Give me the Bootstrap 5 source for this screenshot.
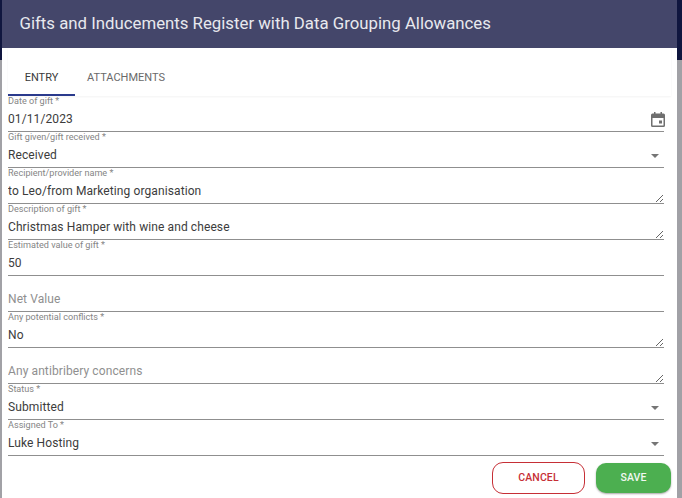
<!DOCTYPE html>
<html lang="en">
<head>
<meta charset="utf-8">
<title>Gifts and Inducements Register</title>
<link href="https://cdn.jsdelivr.net/npm/bootstrap@5.3.0/dist/css/bootstrap.min.css" rel="stylesheet">
<style>
html,body{height:498px;overflow:hidden;}
body{font-family:Roboto,"Liberation Sans",sans-serif;background:linear-gradient(#10163f 0,#10163f 60px,#a1a1a6 60px);}
.dlg{margin:0 5px 0 2px;height:498px;background:#fff;}
.dlg-head{height:48px;background:#44466a;color:#e8e9ee;font-size:16.8px;line-height:46px;padding-left:17.5px;}
.tabbar{height:48px;margin:0 6px;box-shadow:0 1px 2px rgba(0,0,0,.05);}
.tabbar .nav-link{height:48px;color:#6a6a6a;font-size:11px;line-height:16px;padding:22px 12px 0;border-radius:0;}
.tabbar .nav-link.active{color:#3a3a3a;border-bottom:2px solid #2a3a8c;width:67px;text-align:center;}
.fld{height:36px;margin:0 13px 0 6px;border-bottom:1px solid #8f8f8f;position:relative;}
.fld label{display:block;height:12px;font-size:9.1px;line-height:10px;color:#858585;white-space:nowrap;}
.fld .ctl{display:block;width:100%;height:23px;border:0;outline:0;padding:0;margin:0;background-color:transparent;font:12px/23px Roboto,sans-serif;color:#3c3c3c;letter-spacing:.1px;box-shadow:none;border-radius:0;}
.fld .ctl::placeholder{color:#8f8f8f;opacity:1;}
.fld textarea.ctl{resize:both;min-height:23px;max-height:23px;min-width:100%;max-width:100%;overflow:hidden;}
.fld select.ctl{appearance:none;}
.caret-i{position:absolute;right:5px;top:22px;width:0;height:0;border-left:4px solid transparent;border-right:4px solid transparent;border-top:4px solid #757575;}
.cal-i{position:absolute;right:-1px;top:16px;width:14px;height:15px;}
.foot{padding:6px 6px 0 0;gap:11px;}
.btn-c,.btn-s{font-size:10.5px;font-weight:500;padding:0;letter-spacing:.1px;}
.btn-c{width:93px;height:32px;line-height:30px;color:#c62f36;border:1px solid #c62f36;background:#fff;border-radius:11px;}
.btn-s{width:75px;height:30px;margin-top:1px;line-height:30px;color:#f2f7f2;border:0;background:#4caf50;border-radius:10px;box-shadow:0 1px 2px rgba(0,0,0,.35);}
</style>
</head>
<body>
<div class="dlg d-flex flex-column">
  <div class="dlg-head">Gifts and Inducements Register with Data Grouping Allowances</div>
  <ul class="nav tabbar flex-nowrap">
    <li class="nav-item"><a class="nav-link active" href="#">ENTRY</a></li>
    <li class="nav-item"><a class="nav-link" href="#">ATTACHMENTS</a></li>
  </ul>
  <form>
    <div class="fld"><label>Date of gift *</label><input class="ctl" value="01/11/2023">
      <svg class="cal-i" viewBox="0 0 14 15"><path fill="#6f6f6f" fill-rule="evenodd" d="M3 0h1.500v1.500h5V0H11v1.500h1.500A1.500 1.500 0 0 1 14 3v10.500a1.500 1.500 0 0 1-1.500 1.500h-11A1.500 1.500 0 0 1 0 13.500V3a1.500 1.500 0 0 1 1.500-1.500H3zM1.500 6v7.500h11V6zM8 8.500h3v3H8z"/></svg></div>
    <div class="fld"><label>Gift given/gift received *</label><select class="ctl"><option>Received</option></select><span class="caret-i"></span></div>
    <div class="fld"><label>Recipient/provider name *</label><textarea class="ctl" rows="1">to Leo/from Marketing organisation</textarea></div>
    <div class="fld"><label>Description of gift *</label><textarea class="ctl" rows="1">Christmas Hamper with wine and cheese</textarea></div>
    <div class="fld"><label>Estimated value of gift *</label><input class="ctl" value="50"></div>
    <div class="fld"><label>&nbsp;</label><input class="ctl" placeholder="Net Value"></div>
    <div class="fld"><label>Any potential conflicts *</label><textarea class="ctl" rows="1">No</textarea></div>
    <div class="fld"><label>&nbsp;</label><textarea class="ctl" rows="1" placeholder="Any antibribery concerns"></textarea></div>
    <div class="fld"><label>Status *</label><select class="ctl"><option>Submitted</option></select><span class="caret-i"></span></div>
    <div class="fld"><label>Assigned To *</label><select class="ctl"><option>Luke Hosting</option></select><span class="caret-i"></span></div>
  </form>
  <div class="d-flex justify-content-end foot">
    <button type="button" class="btn btn-c">CANCEL</button>
    <button type="button" class="btn btn-s">SAVE</button>
  </div>
</div>
<script src="https://cdn.jsdelivr.net/npm/bootstrap@5.3.0/dist/js/bootstrap.bundle.min.js"></script>
</body>
</html>
